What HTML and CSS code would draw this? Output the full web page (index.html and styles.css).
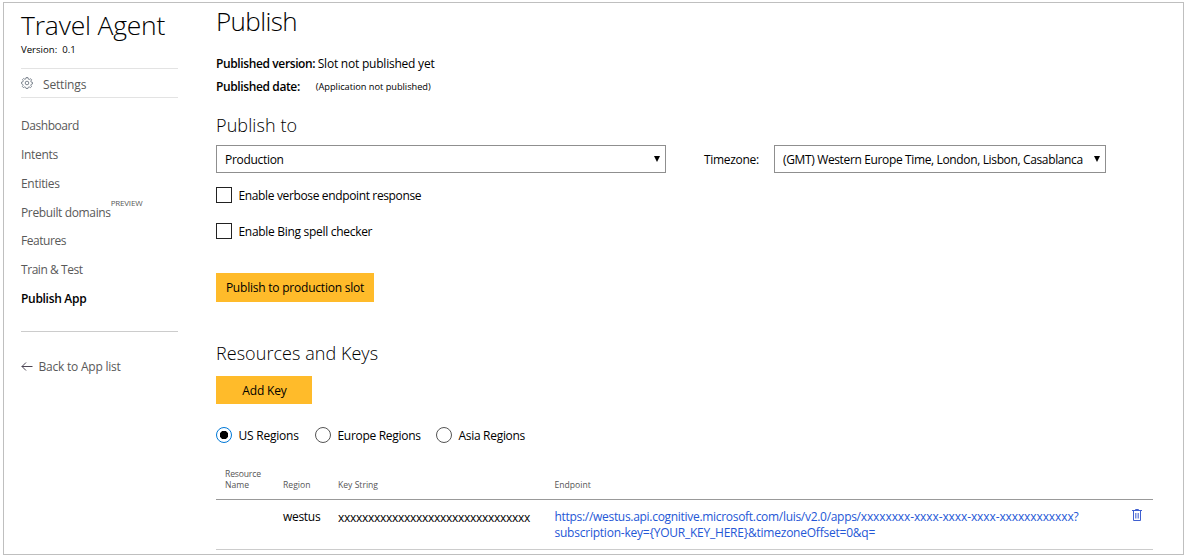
FILE: index.html
```html
<!DOCTYPE html>
<html lang="en">
<head>
<meta charset="utf-8">
<title>Travel Agent - Publish</title>
<link rel="stylesheet" href="styles.css">
</head>
<body>
<div class="frame">
  <aside class="sidebar">
    <h1 class="app-name">Travel Agent</h1>
    <div class="version">Version:&nbsp; 0.1</div>
    <a class="settings">
      <svg class="gear" viewBox="0 0 12 12" width="12" height="12"><path d="M5 .6h2l.3 1.500 1 .4 1.300-.8 1 1.100-.8 1.300.4 1 1.300.3v1.500l-1.300.4-.4 1 .7 1.300-1.100 1-1.200-.7-1 .4-.3 1.200H5.100l-.4-1.200-1-.4-1.300.7-1-1.100.7-1.200-.4-1L.5 6.700V5.200l1.400-.4.4-1-.8-1.200 1.100-1.100 1.200.8 1-.4z"/><circle cx="6" cy="6" r="1.800"/></svg>
      <span class="t15">Settings</span>
    </a>
    <nav class="menu">
      <a class="t4">Dashboard</a>
      <a class="t3">Intents</a>
      <a class="t3">Entities</a>
      <a><span class="t35">Prebuilt domains</span><sup class="preview">PREVIEW</sup></a>
      <a class="t4">Features</a>
      <a class="t4">Train &amp; Test</a>
      <a class="active t3">Publish App</a>
    </nav>
    <a class="back">
      <svg viewBox="0 0 12 10" width="12" height="10"><path d="M11.500 4.500H.8M5 .5l-4 4 4 4"/></svg>
      <span class="t2">Back to App list</span>
    </a>
  </aside>
  <main class="content">
    <h2 class="page-title">Publish</h2>
    <div class="info"><b>Published version:</b><span class="slot t2">Slot not published yet</span></div>
    <div class="info"><b>Published date:</b><span class="note">(Application not published)</span></div>
    <h3 class="heading to">Publish to</h3>
    <div class="target">
      <div class="select slot-select"><span class="t3">Production</span><i class="caret"></i></div>
      <label class="tz-label t3">Timezone:</label>
      <div class="select tz-select"><span class="t35">(GMT) Western Europe Time, London, Lisbon, Casablanca</span><i class="caret"></i></div>
    </div>
    <label class="check"><i class="box"></i><span class="t35">Enable verbose endpoint response</span></label>
    <label class="check"><i class="box"></i><span class="t3">Enable Bing spell checker</span></label>
    <button class="btn publish t2">Publish to production slot</button>
    <h3 class="heading keys">Resources and Keys</h3>
    <button class="btn add t15">Add Key</button>
    <div class="regions">
      <label class="radio on"><i class="dot"></i><span class="t2">US Regions</span></label>
      <label class="radio wide"><i class="dot"></i><span class="t3">Europe Regions</span></label>
      <label class="radio"><i class="dot"></i><span class="t3">Asia Regions</span></label>
    </div>
    <div class="row head">
      <div><span class="t15">Resource</span><br>Name</div><div>Region</div><div>Key String</div><div>Endpoint</div><div></div>
    </div>
    <div class="row data">
      <div></div><div class="t3">westus</div><div class="key">xxxxxxxxxxxxxxxxxxxxxxxxxxxxxxxx</div>
      <div class="url"><span class="host">https://westus.api.cognitive.microsoft.com/luis/v2.0/apps/</span><span class="t1">xxxxxxxx-xxxx-xxxx-xxxx-xxxxxxxxxxxx?</span><br><span class="query">subscription-key={YOUR_KEY_HERE}&amp;timezoneOffset=0&amp;q=</span></div>
      <div><svg class="trash" viewBox="0 0 10 12" width="10" height="12"><path d="M0 1.500h10M3.500 1.500V.5h3v1M1.500 1.500v10h7v-10"/><path class="ribs" d="M3.500 4v5.500M5 4v5.500M6.500 4v5.500"/></svg></div>
    </div>
  </main>
</div>
</body>
</html>
```
FILE: styles.css
```css
* { box-sizing: border-box; }
body { margin: 0; background: #fff; color: #000; font-family: "Open Sans", "Noto Sans", sans-serif; font-size: 12px; }
h1, h2, h3 { margin: 0; font-weight: 300; }
svg { fill: none; flex: none; }

/* letter-spacing steps */
.t1 { letter-spacing: -.1px; }
.t15 { letter-spacing: -.16px; }
.t2 { letter-spacing: -.22px; }
.t3 { letter-spacing: -.3px; }
.t35 { letter-spacing: -.36px; }
.t4 { letter-spacing: -.44px; }

.frame { display: flex; width: 1181px; height: 553px; margin: 2px 3px 0; border: 1px solid #bfbfbf; }
.sidebar { width: 212px; padding: 6px 38px 0 17px; white-space: nowrap; color: #595959; }
.app-name { height: 33px; line-height: 33px; font-size: 26.5px; letter-spacing: -.2px; color: #000; }
.version { height: 14px; line-height: 15px; font-size: 9.6px; color: #000; }
.settings { display: flex; align-items: center; gap: 10px; height: 30px; margin-top: 12px; border: solid #e3e3e3; border-width: 1px 0; }
.settings span { padding-top: 2px; }
.gear { stroke: #6f7883; stroke-width: .9; }
.menu { display: flex; flex-direction: column; margin-top: 14px; padding-bottom: 17px; border-bottom: 1px solid #ccc; }
.menu a { display: flex; height: 28.850px; line-height: 28.600px; }
.preview { font-size: 8px; line-height: 7px; letter-spacing: -.2px; }
.active { color: #000; font-weight: 600; }
.back { display: flex; align-items: center; gap: 5.500px; height: 20px; margin-top: 25px; }
.back svg { stroke: #4b4453; }

.content { width: 937px; white-space: nowrap; }
.page-title { height: 36px; line-height: 36px; font-size: 26px; letter-spacing: -.6px; }
.info { display: flex; height: 23px; line-height: 23px; }
.page-title + .info { margin-top: 13px; }
.info b { font-weight: 600; letter-spacing: -.38px; }
.slot { margin-left: 2.500px; }
.note { margin-left: 16px; line-height: 24px; font-size: 9.250px; letter-spacing: -.03px; }
.heading { height: 24px; margin-top: 15px; line-height: 24px; font-size: 18px; }
.to { letter-spacing: .1px; }
.target { display: flex; height: 28px; margin-top: 8px; line-height: 28px; }
.select { display: flex; justify-content: space-between; align-items: center; border: 1px solid #8f8f8f; padding: 0 5px 0 8px; }
.select span { padding-top: 1px; }
.slot-select { width: 450px; }
.tz-label { width: 108px; padding-left: 38px; line-height: 30px; }
.tz-select { width: 332px; }
.caret { flex: none; border: solid transparent; border-width: 6px 3px 0; border-top-color: #000; }
.check { display: flex; align-items: center; gap: 6.500px; width: 300px; height: 16px; margin-top: 14px; }
.check span { padding-top: 1px; }
.check + .check { margin-top: 20px; }
.box { flex: none; width: 16px; height: 16px; border: 1px solid #222; }
.btn { display: block; padding: 0; border: 0; background: #ffbb2a; color: #000; font-family: inherit; font-size: 12px; }
.publish { width: 158px; height: 29px; margin-top: 34px; }
.keys { height: 23px; margin-top: 40px; line-height: 22px; letter-spacing: .05px; }
.add { width: 96px; height: 28px; margin-top: 11px; padding-left: 1px; }
.regions { display: flex; height: 16px; margin-top: 23px; }
.radio { display: flex; align-items: center; gap: 6.500px; width: 99px; }
.radio span { padding-top: 1px; }
.wide { width: 121px; }
.dot { flex: none; width: 16px; height: 16px; border: 1px solid #555; border-radius: 50%; }
.on .dot { border-color: #0078d7; background: radial-gradient(circle, #000 4px, transparent 4.500px); }

.row { display: grid; grid-template-columns: 58px 55px 216.500px 577.500px 1fr; padding-left: 9px; }
.head { align-items: end; height: 57px; padding-bottom: 8px; border-bottom: 1px solid #999; font-size: 8.600px; line-height: 11px; color: #555; }
.data { height: 50px; padding-top: 9px; border-bottom: 1px solid #ccc; line-height: 16px; }
.key { padding-top: 1px; letter-spacing: -.28px; }
.url { color: #2457d6; }
.host { letter-spacing: -.3px; }
.query { letter-spacing: -.23px; }
.trash { stroke: #3f5fd0; }
.ribs { stroke-width: .7; }
```
